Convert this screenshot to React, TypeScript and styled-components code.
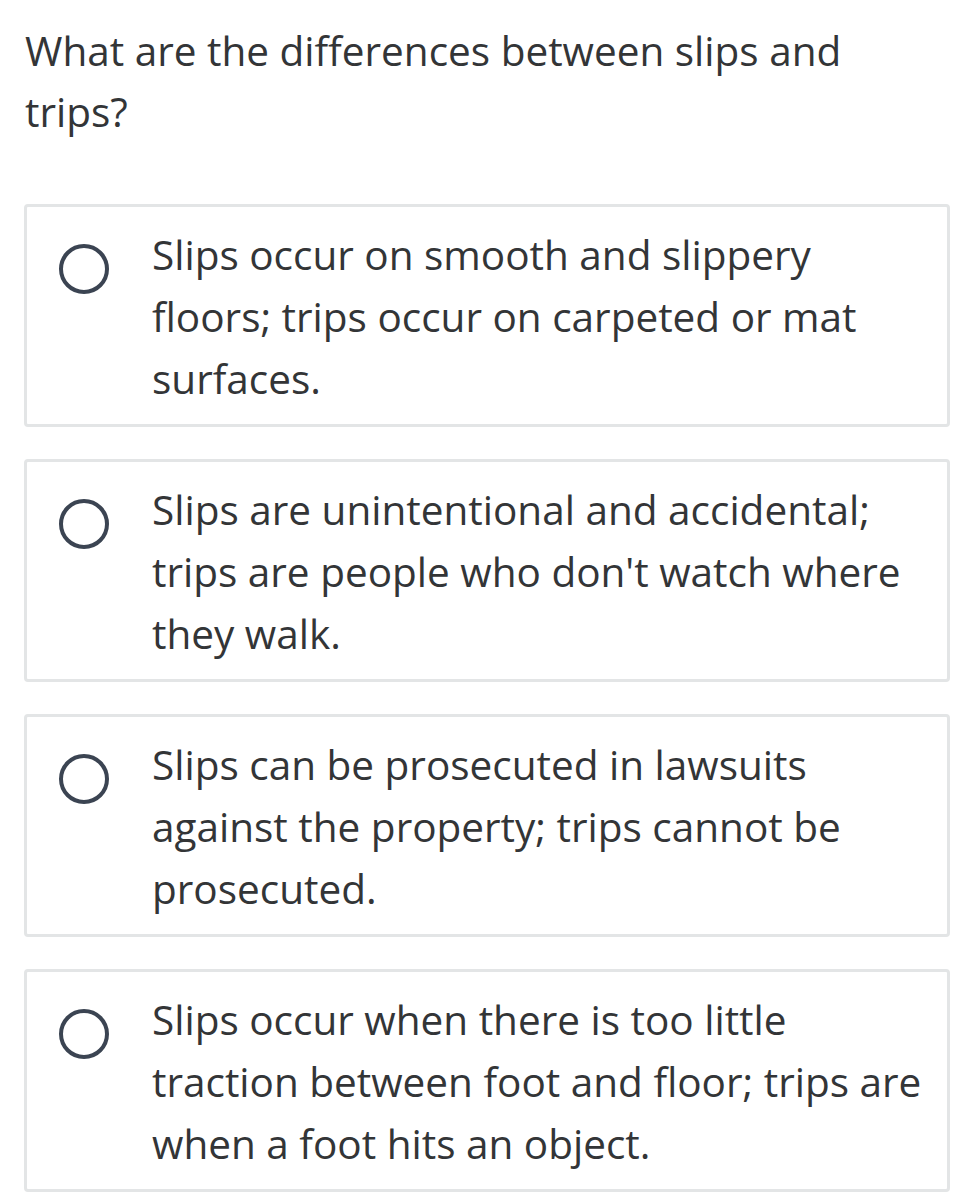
import styled, { createGlobalStyle } from 'styled-components';

const GlobalStyle = createGlobalStyle`
    html, body {
        margin: 0;
        padding: 0;
        background: #ffffff;
    }

    body {
        font-family: 'Open Sans', 'Noto Sans', sans-serif;
        color: #333537;
    }
`;

const Page = styled.div`
    display: flex;
    flex-direction: column;
    padding: 20px 21px 0 24px;
`;

const Question = styled.div`
    font-size: 40.5px;
    font-weight: 400;
    line-height: 61px;
    padding-left: 1px;
    margin-bottom: 62px;
`;

const OptionList = styled.div`
    display: flex;
    flex-direction: column;
    gap: 32px;
`;

const Option = styled.label`
    display: flex;
    align-items: flex-start;
    gap: 43px;
    padding: 17px 12px 14px 32px;
    border: 3px solid #e3e5e6;
    border-radius: 4px;
    cursor: pointer;
`;

const Radio = styled.span`
    flex: none;
    box-sizing: border-box;
    width: 50px;
    height: 50px;
    margin-top: 20px;
    border: 4.5px solid #3b4452;
    border-radius: 50%;
`;

const OptionText = styled.div`
    font-size: 40.5px;
    line-height: 62px;
`;

const options = [
    'Slips occur on smooth and slippery floors; trips occur on carpeted or mat surfaces.',
    "Slips are unintentional and accidental; trips are people who don't watch where they walk.",
    'Slips can be prosecuted in lawsuits against the property; trips cannot be prosecuted.',
    'Slips occur when there is too little traction between foot and floor; trips are when a foot hits an object.',
];

const App = () => {
    return (
        <>
            <GlobalStyle />
            <Page>
                <Question>What are the differences between slips and trips?</Question>
                <OptionList>
                    {options.map((text, index) => (
                        <Option key={`option-${index}`}>
                            <Radio />
                            <OptionText>{text}</OptionText>
                        </Option>
                    ))}
                </OptionList>
            </Page>
        </>
    );
};

export default App;
